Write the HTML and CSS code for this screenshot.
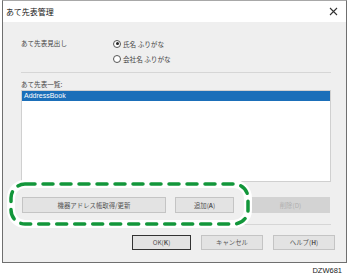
FILE: index.html
```html
<!DOCTYPE html>
<html lang="ja">
<head>
  <meta charset="UTF-8" />
  <title>あて先表管理</title>
  <link rel="stylesheet" href="styles.css">
</head>
<body>
  <div class="dialog">
    <div class="titlebar">
      <span class="title">あて先表管理</span>
      <svg class="close" width="9" height="9" viewBox="0 0 9 9">
        <path d="M1 1L8 8M8 1L1 8" stroke="#333" stroke-width="1.1" fill="none"/>
      </svg>
    </div>

    <div class="content">
      <div class="heading-row">
        <span class="label">あて先表見出し</span>
        <div class="radios">
          <label class="radio"><span class="dot checked"></span>氏名 ふりがな</label>
          <label class="radio"><span class="dot"></span>会社名 ふりがな</label>
        </div>
      </div>

      <hr class="sep">

      <div class="label list-label">あて先表一覧:</div>
      <div class="listbox">
        <div class="list-item selected">AddressBook</div>
      </div>

      <div class="action-row">
        <button class="btn wide">機器アドレス帳取得/更新</button>
        <button class="btn add">追加(<u>A</u>)</button>
        <button class="btn del" disabled>削除(<u>D</u>)</button>
        <svg class="highlight" width="250" height="54" viewBox="0 0 250 54">
          <rect x="4" y="4" width="237" height="40" rx="14" fill="none" stroke="#fff" stroke-width="8"/>
          <rect x="4" y="4" width="237" height="40" rx="14" fill="none" stroke="#12963a" stroke-width="3.5" stroke-dasharray="10 8" stroke-linecap="round"/>
        </svg>
      </div>

      <hr class="sep sep-bottom">

      <div class="footer">
        <button class="btn ok">OK(<u>K</u>)</button>
        <button class="btn cancel">キャンセル</button>
        <button class="btn help">ヘルプ(<u>H</u>)</button>
      </div>
    </div>
  </div>
  <div class="code">DZW681</div>
</body>
</html>
```

FILE: styles.css
```css
body {
  margin: 0;
  background-color: #ffffff;
  font-family: "Noto Sans CJK JP", "Noto Sans", sans-serif;
  color: #333333;
}
.dialog {
  margin-left: 2px;
  width: 343px;
  border: 1px solid #6f6f6f;
  border-top-color: #a8a8a8;
  background-color: #efefef;
}
.titlebar {
  height: 21px;
  display: flex;
  justify-content: space-between;
  align-items: center;
  padding: 0 8px 0 3px;
  background-color: #ffffff;
}
.title {
  font-size: 8px;
  color: #111111;
}
.content {
  padding: 14px 14px 12px 18px;
}
.label {
  font-size: 6.6px;
  color: #444444;
}
.heading-row {
  display: flex;
}
.heading-row .label {
  width: 92px;
  line-height: 15px;
}
.radios {
  display: flex;
  flex-direction: column;
}
.radio {
  display: flex;
  align-items: center;
  gap: 2px;
  height: 15px;
  font-size: 6.6px;
  color: #444444;
}
.dot {
  width: 6px;
  height: 6px;
  border: 1px solid #555555;
  border-radius: 50%;
  background-color: #ffffff;
  position: relative;
}
.dot.checked::after {
  content: "";
  position: absolute;
  left: 1.5px;
  top: 1.5px;
  width: 3px;
  height: 3px;
  border-radius: 50%;
  background-color: #222222;
}
.sep {
  margin: 6px 0 5px 0;
  border: none;
  border-top: 1px solid #d6d6d6;
  width: 310px;
}
.sep-bottom {
  margin: 11px 0 10px 0;
}
.list-label {
  line-height: 12px;
}
.listbox {
  width: 308px;
  height: 90px;
  border: 1px solid #d0d0d0;
  background-color: #ffffff;
}
.list-item {
  height: 10px;
  line-height: 10px;
  font-size: 7px;
  padding-left: 2px;
  font-family: "Liberation Sans", sans-serif;
}
.list-item.selected {
  background-color: #1b6fb9;
  color: #ffffff;
}
.action-row {
  position: relative;
  display: flex;
  margin-top: 15px;
  padding-left: 1px;
}
.btn {
  height: 16px;
  padding: 0;
  border: 1px solid #c4c4c4;
  background-color: #e3e3e3;
  font-family: "Noto Sans CJK JP", "Liberation Sans", sans-serif;
  font-size: 6.4px;
  color: #555555;
}
.btn u {
  text-decoration: none;
  font-weight: bold;
}
.wide {
  width: 144px;
}
.add {
  width: 59px;
  margin-left: 9px;
}
.del {
  width: 79px;
  margin-left: 17px;
  background-color: #d3d3d3;
  border-color: #d3d3d3;
  color: #b0b0b0;
}
.del u {
  font-weight: normal;
}
.highlight {
  position: absolute;
  left: -14px;
  top: -17px;
}
.footer {
  display: flex;
  justify-content: flex-end;
  gap: 10px;
  margin-right: -3px;
}
.footer .btn {
  height: 15px;
}
.ok {
  width: 59px;
  border-color: #333333;
}
.cancel,
.help {
  width: 62px;
}
.code {
  width: 342px;
  text-align: right;
  margin-top: 3px;
  font-family: "Liberation Sans", sans-serif;
  font-size: 7.5px;
  color: #222222;
}
```
